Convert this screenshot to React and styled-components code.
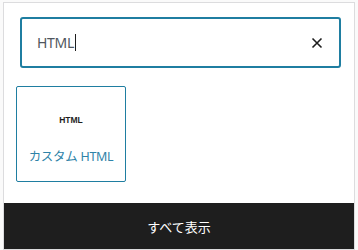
import styled, { createGlobalStyle } from "styled-components";

const GlobalStyle = createGlobalStyle`
  html, body {
    margin: 0;
    padding: 0;
    background: #fff;
    font-family: "Noto Sans", "Noto Sans CJK JP", sans-serif;
  }
`;

const Page = styled.div`
  position: relative;
  width: 358px;
  height: 250px;
  overflow: hidden;
  background: #fafafa;
`;

const Popover = styled.div`
  position: absolute;
  left: 3px;
  top: 2px;
  width: 350px;
  height: 246px;
  background: #fff;
  border: 1px solid #dcdcde;
  display: flex;
  flex-direction: column;
`;

const SearchWrap = styled.div`
  padding: 14px 13px 0 16px;
`;

const SearchBox = styled.div`
  height: 47px;
  border: 2px solid #1f7ea1;
  border-radius: 3px;
  display: flex;
  align-items: center;
  padding: 0 16px 0 15px;
`;

const SearchText = styled.span`
  flex: 1;
  font-size: 14px;
  color: #50575e;
  letter-spacing: -0.3px;
`;

const Caret = styled.span`
  display: inline-block;
  width: 1px;
  height: 17px;
  background: #1e1e1e;
  vertical-align: -3px;
  margin-left: 1px;
`;

const List = styled.div`
  flex: 1;
  padding: 18px 12px 0;
`;

const Card = styled.div`
  width: 108px;
  height: 94px;
  border: 1px solid #1f7ea1;
  border-radius: 2px;
  display: flex;
  flex-direction: column;
  align-items: center;
`;

const CardIcon = styled.div`
  margin-top: 27px;
  height: 12px;
  font-family: "Liberation Sans", Arial, sans-serif;
  font-size: 8.5px;
  font-weight: 700;
  color: #1e1e1e;
  line-height: 12px;
`;

const CardTitle = styled.div`
  margin-top: 20px;
  font-size: 12.5px;
  color: #2f83a8;
  letter-spacing: -0.3px;
`;

const Footer = styled.div`
  height: 46px;
  background: #1e1e1e;
  color: #fff;
  display: flex;
  align-items: center;
  justify-content: center;
  font-size: 13px;
  font-family: "Noto Sans CJK JP", sans-serif;
`;

function CloseIcon() {
  return (
    <svg width="12" height="12" viewBox="0 0 12 12">
      <path d="M1.5 1.5 L10.5 10.5 M10.5 1.5 L1.5 10.5" stroke="#1e1e1e" strokeWidth="1.6" />
    </svg>
  );
}

export default function App() {
  return (
    <>
      <GlobalStyle />
      <Page>
        <Popover>
          <SearchWrap>
            <SearchBox>
              <SearchText>
                HTML<Caret />
              </SearchText>
              <CloseIcon />
            </SearchBox>
          </SearchWrap>
          <List>
            <Card>
              <CardIcon>HTML</CardIcon>
              <CardTitle>カスタム HTML</CardTitle>
            </Card>
          </List>
          <Footer>すべて表示</Footer>
        </Popover>
      </Page>
    </>
  );
}
